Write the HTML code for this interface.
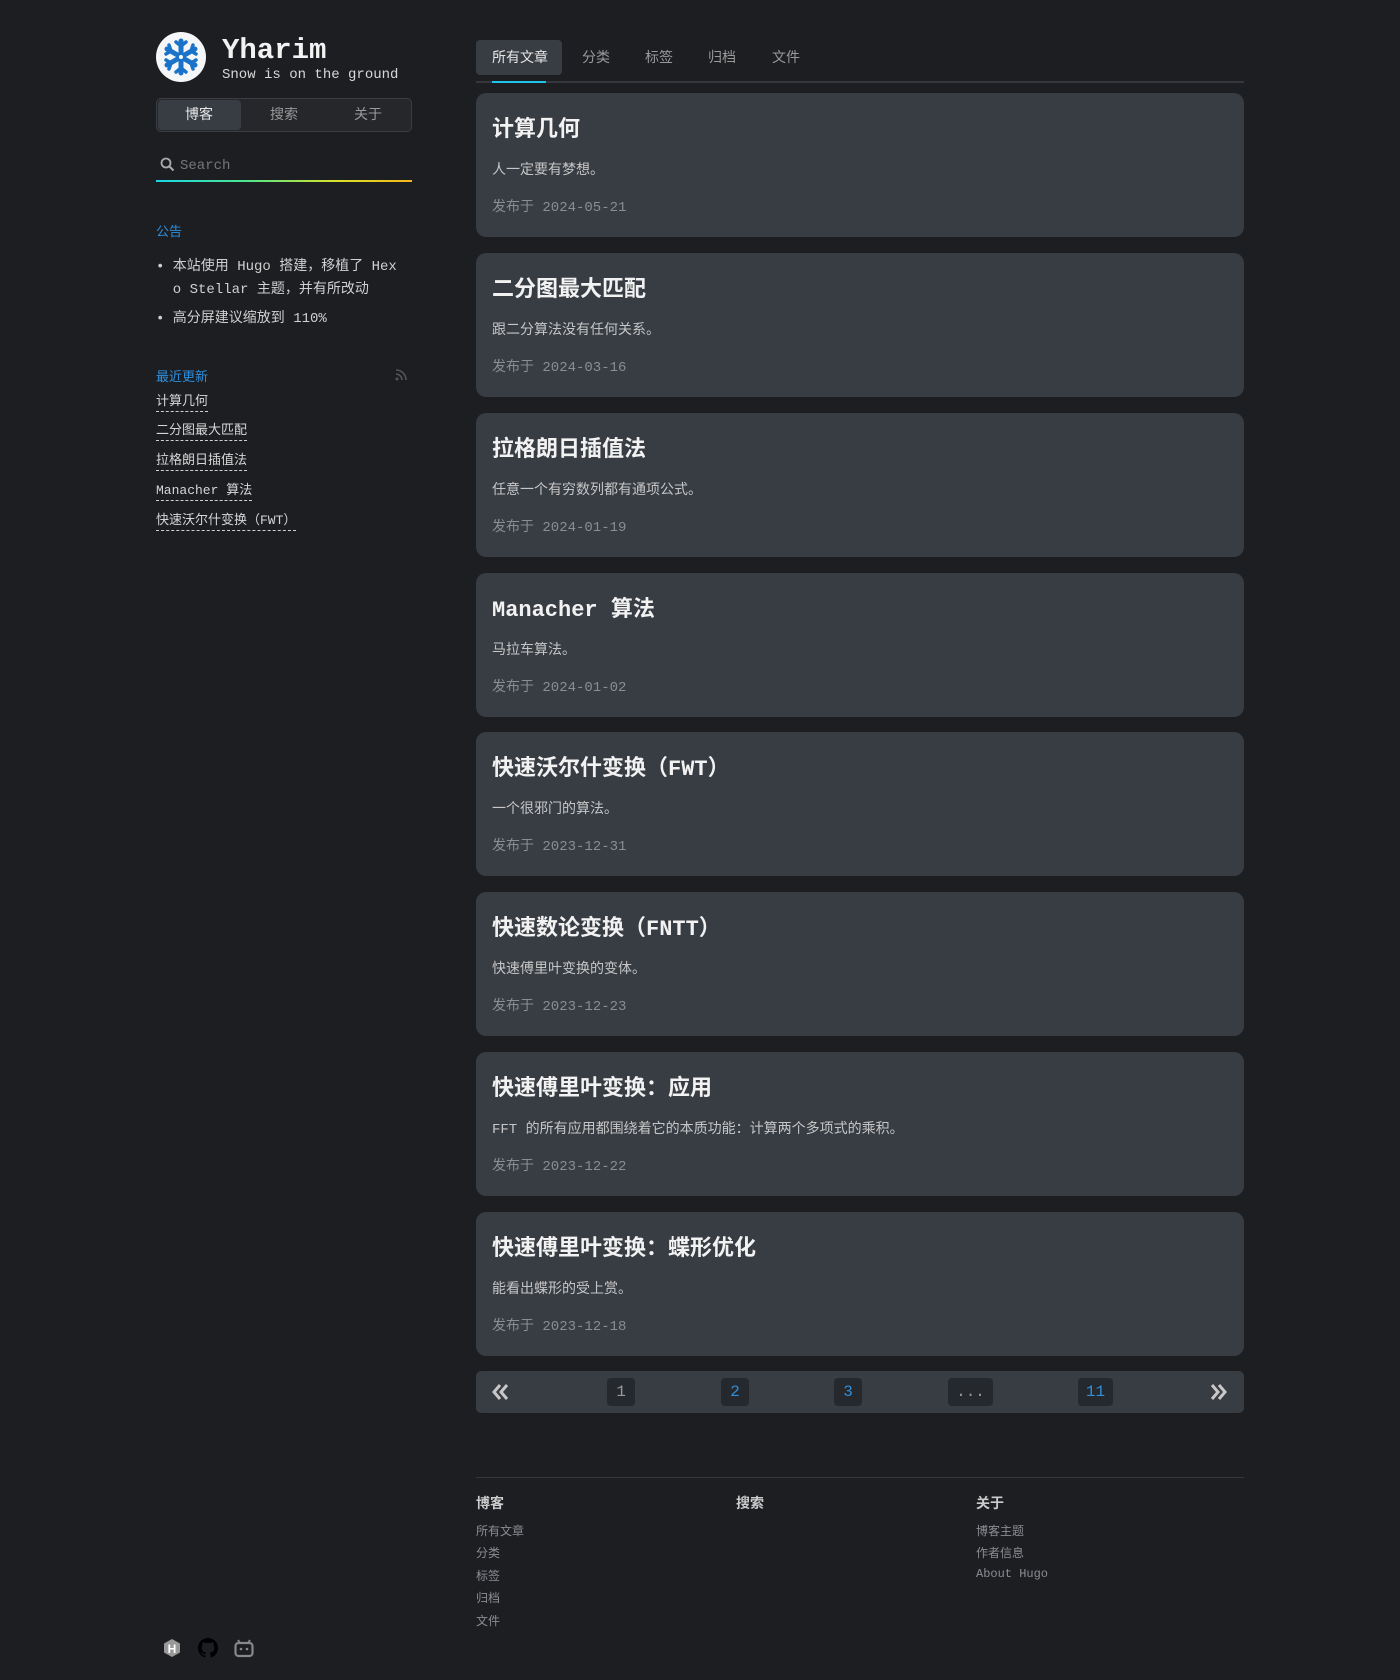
<!DOCTYPE html>
<html><head><meta charset="utf-8"><style>
*{margin:0;padding:0;box-sizing:border-box}
body{width:1400px;height:1680px;background:#1d1e22;font-family:"Liberation Mono","Noto Sans CJK SC",monospace;color:#ddd;position:relative;overflow:hidden}
.a{position:absolute;white-space:nowrap}
.card{position:absolute;left:476px;width:768px;height:144px;background:#383c43;border-radius:10px}
.card .t{position:absolute;left:16px;top:23px;font-size:22px;font-weight:bold;color:#f2f2f2;line-height:30px}
.card .d{position:absolute;left:16px;top:68px;font-size:14px;color:#c6c6c6;line-height:20px}
.card .m{position:absolute;left:16px;top:105px;font-size:14px;color:#8a8d92;line-height:20px}
.lk{position:absolute;left:156px;font-size:13px;color:#d6d6d6;border-bottom:1px dashed #cfcfcf;line-height:19px}
.pb{position:absolute;top:1378px;height:28px;background:#25282c;border-radius:4px;font-size:16px;text-align:center;line-height:28px}
.fl{position:absolute;font-size:12px;color:#8a8d92}
.fh{position:absolute;top:1493px;font-size:14px;color:#ccc;font-weight:bold}
</style></head><body>
<svg class="a" style="left:156px;top:32px" width="50" height="50" viewBox="0 0 50 50">
<circle cx="25" cy="25" r="25" fill="#f4f6f8"/>
<g stroke="#1a73c8" stroke-width="5" stroke-linecap="round" fill="none">
<line x1="25" y1="9" x2="25" y2="41"/><line x1="11" y1="17" x2="39" y2="33"/><line x1="11" y1="33" x2="39" y2="17"/>
</g>
<g stroke="#1a73c8" stroke-width="3.5" fill="none" stroke-linecap="round">
<path d="M20 10 L25 14 L30 10"/><path d="M20 40 L25 36 L30 40"/><path d="M10 22 L15 19 L13 13"/><path d="M40 28 L35 31 L37 37"/><path d="M10 28 L15 31 L13 37"/><path d="M40 22 L35 19 L37 13"/>
</g>
<circle cx="25" cy="25" r="2" fill="#fff"/>
</svg>
<div class="a" style="left:222px;top:34px;font-size:29px;font-weight:bold;color:#f2f2f2">Yharim</div>
<div class="a" style="left:222px;top:67px;font-size:14px;color:#d8d8d8">Snow is on the ground</div>
<div class="a" style="left:156px;top:98px;width:256px;height:34px;background:#25272b;border:1px solid #3a3d42;border-radius:5px"></div>
<div class="a" style="left:158px;top:100px;width:83px;height:30px;background:#383c43;border-radius:4px"></div>
<div class="a" style="left:185px;top:104px;font-size:14px;color:#e6e6e6">博客</div>
<div class="a" style="left:270px;top:104px;font-size:14px;color:#999">搜索</div>
<div class="a" style="left:354px;top:104px;font-size:14px;color:#999">关于</div>
<svg class="a" style="left:160px;top:157px" width="15" height="15" viewBox="0 0 15 15"><circle cx="6" cy="6" r="4.5" stroke="#aaa" stroke-width="1.8" fill="none"/><line x1="9.5" y1="9.5" x2="13.5" y2="13.5" stroke="#aaa" stroke-width="2"/></svg>
<div class="a" style="left:180px;top:158px;font-size:14px;color:#777">Search</div>
<div class="a" style="left:156px;top:180px;width:256px;height:2px;background:linear-gradient(90deg,#17d6e8,#4ee58c 35%,#d8e32a 70%,#f7b51a)"></div>
<div class="a" style="left:156px;top:221px;font-size:13px;color:#2e8fdc">公告</div>
<div class="a" style="left:156px;top:256px;font-size:14px;color:#d0d0d0;line-height:23px">•&nbsp;本站使用 Hugo 搭建，移植了 Hex<br>&nbsp;&nbsp;o Stellar 主题，并有所改动</div>
<div class="a" style="left:156px;top:307px;font-size:14px;color:#d0d0d0">•&nbsp;高分屏建议缩放到 110%</div>
<div class="a" style="left:156px;top:366px;font-size:13px;color:#2e8fdc">最近更新</div>
<svg class="a" style="left:395px;top:369px" width="12" height="12" viewBox="0 0 12 12"><circle cx="2" cy="10" r="1.5" fill="#555"/><path d="M1 5a6 6 0 0 1 6 6M1 1a10 10 0 0 1 10 10" stroke="#555" stroke-width="1.6" fill="none"/></svg>
<div class="lk" style="top:392px">计算几何</div>
<div class="lk" style="top:421px">二分图最大匹配</div>
<div class="lk" style="top:451px">拉格朗日插值法</div>
<div class="lk" style="top:481px">Manacher 算法</div>
<div class="lk" style="top:511px">快速沃尔什变换（FWT）</div>

<div class="a" style="left:476px;top:40px;width:86px;height:35px;background:#383c43;border-radius:4px"></div>
<div class="a" style="left:492px;top:47px;font-size:14px;color:#e6e6e6">所有文章</div>
<div class="a" style="left:582px;top:47px;font-size:14px;color:#999">分类</div>
<div class="a" style="left:645px;top:47px;font-size:14px;color:#999">标签</div>
<div class="a" style="left:708px;top:47px;font-size:14px;color:#999">归档</div>
<div class="a" style="left:772px;top:47px;font-size:14px;color:#999">文件</div>
<div class="a" style="left:476px;top:81px;width:768px;height:2px;background:#34373c"></div>
<div class="a" style="left:492px;top:81px;width:54px;height:2px;background:#1fc4ea"></div>

<div class="card" style="top:93px"><div class="t">计算几何</div><div class="d">人一定要有梦想。</div><div class="m">发布于 2024-05-21</div></div>
<div class="card" style="top:253px"><div class="t">二分图最大匹配</div><div class="d">跟二分算法没有任何关系。</div><div class="m">发布于 2024-03-16</div></div>
<div class="card" style="top:413px"><div class="t">拉格朗日插值法</div><div class="d">任意一个有穷数列都有通项公式。</div><div class="m">发布于 2024-01-19</div></div>
<div class="card" style="top:573px"><div class="t">Manacher 算法</div><div class="d">马拉车算法。</div><div class="m">发布于 2024-01-02</div></div>
<div class="card" style="top:732px"><div class="t">快速沃尔什变换（FWT）</div><div class="d">一个很邪门的算法。</div><div class="m">发布于 2023-12-31</div></div>
<div class="card" style="top:892px"><div class="t">快速数论变换（FNTT）</div><div class="d">快速傅里叶变换的变体。</div><div class="m">发布于 2023-12-23</div></div>
<div class="card" style="top:1052px"><div class="t">快速傅里叶变换：应用</div><div class="d">FFT 的所有应用都围绕着它的本质功能：计算两个多项式的乘积。</div><div class="m">发布于 2023-12-22</div></div>
<div class="card" style="top:1212px"><div class="t">快速傅里叶变换：蝶形优化</div><div class="d">能看出蝶形的受上赏。</div><div class="m">发布于 2023-12-18</div></div>

<div class="a" style="left:476px;top:1371px;width:768px;height:42px;background:#383c43;border-radius:5px"></div>
<svg class="a" style="left:491px;top:1383px" width="18" height="18" viewBox="0 0 18 18"><path d="M9 2L3 9l6 7M16 2l-6 7 6 7" stroke="#c8c8c8" stroke-width="3" fill="none"/></svg>
<svg class="a" style="left:1210px;top:1383px" width="18" height="18" viewBox="0 0 18 18"><path d="M2 2l6 7-6 7M9 2l6 7-6 7" stroke="#c8c8c8" stroke-width="3" fill="none"/></svg>
<div class="pb" style="left:607px;width:28px;color:#999">1</div>
<div class="pb" style="left:721px;width:28px;color:#2e8fdc">2</div>
<div class="pb" style="left:834px;width:28px;color:#2e8fdc">3</div>
<div class="pb" style="left:948px;width:45px;color:#999">...</div>
<div class="pb" style="left:1078px;width:35px;color:#2e8fdc">11</div>

<div class="a" style="left:476px;top:1477px;width:768px;height:1px;background:#34373c"></div>
<div class="fh" style="left:476px">博客</div>
<div class="fh" style="left:736px">搜索</div>
<div class="fh" style="left:976px">关于</div>
<div class="fl" style="left:476px;top:1522px">所有文章</div>
<div class="fl" style="left:476px;top:1544px">分类</div>
<div class="fl" style="left:476px;top:1567px">标签</div>
<div class="fl" style="left:476px;top:1589px">归档</div>
<div class="fl" style="left:476px;top:1612px">文件</div>
<div class="fl" style="left:976px;top:1522px">博客主题</div>
<div class="fl" style="left:976px;top:1544px">作者信息</div>
<div class="fl" style="left:976px;top:1567px">About Hugo</div>

<svg class="a" style="left:162px;top:1638px" width="20" height="20" viewBox="0 0 20 20"><polygon points="10,1 18,5.5 18,14.5 10,19 2,14.5 2,5.5" fill="#999"/><text x="10" y="15" font-size="12" font-weight="bold" fill="#fff" text-anchor="middle" font-family="Liberation Sans">H</text></svg>
<svg class="a" style="left:198px;top:1638px" width="20" height="20" viewBox="0 0 16 16"><path fill="#000" d="M8 0C3.580 0 0 3.58 0 8c0 3.54 2.29 6.53 5.47 7.59.4.07.55-.17.55-.38v-1.33c-2.23.48-2.7-1.07-2.7-1.070-.36-.92-.89-1.17-.89-1.17-.73-.5.06-.49.06-.49.8.06 1.23.83 1.23.83.71 1.23 1.87.87 2.33.66.07-.52.28-.87.5-1.07-1.78-.2-3.64-.89-3.64-3.95 0-.87.31-1.59.82-2.15-.08-.2-.36-1.02.08-2.12 0 0 .67-.21 2.2.82a7.6 7.6 0 0 1 4 0c1.53-1.04 2.2-.82 2.2-.82.44 1.1.16 1.92.08 2.12.51.56.82 1.27.82 2.15 0 3.070-1.87 3.75-3.65 3.95.29.25.54.73.54 1.48v2.2c0 .21.15.46.55.38A8 8 0 0 0 16 8c0-4.42-3.58-8-8-8z"/></svg>
<svg class="a" style="left:234px;top:1638px" width="20" height="20" viewBox="0 0 20 20"><rect x="1.5" y="5" width="17" height="13" rx="3" stroke="#888" stroke-width="2.2" fill="none"/><path d="M6 5L4 2M14 5L16 2" stroke="#888" stroke-width="2"/><circle cx="7" cy="11" r="1.3" fill="#888"/><circle cx="13" cy="11" r="1.3" fill="#888"/></svg>
</body></html>
